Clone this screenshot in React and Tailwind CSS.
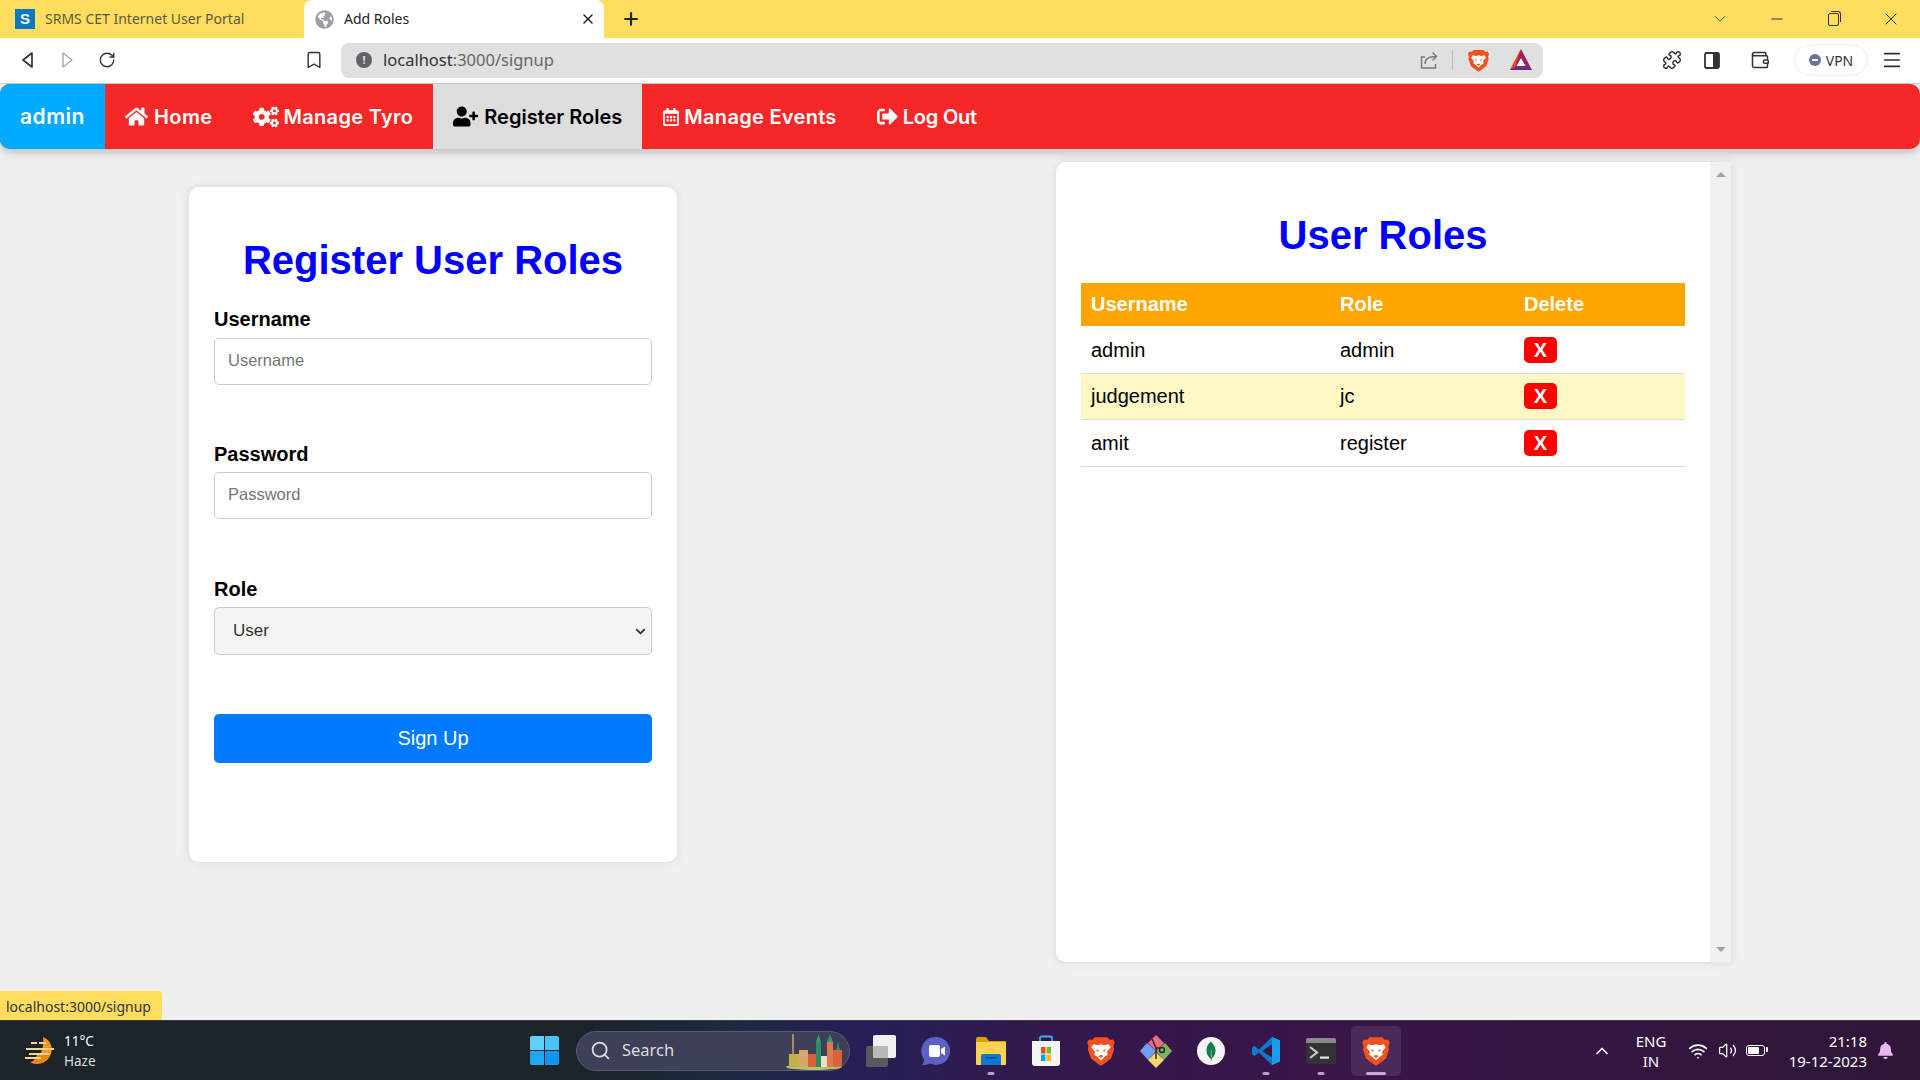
import { ChevronDown, Minus, X, Plus, RotateCw, Bookmark, Puzzle, Wallet, Menu, Search, ChevronUp, Wifi, Volume2 } from "lucide-react";
import { FaHome, FaCogs, FaUserPlus, FaRegCalendarAlt, FaSignOutAlt, FaBell, FaGlobeAmericas } from "react-icons/fa";
import { SiMongodb } from "react-icons/si";

function Brave({ size = 24 }) {
  return (
    <svg width={size} height={size} viewBox="0 0 24 24">
      <path d="M7 1h10l2 2 2.500-.3L23 5l-1 3.500.5 2L20 18l-6 4.500-2 1.300-2-1.300L4 18 1.500 10.500 2 8.500 1 5l1.500-2.300L5 3z" fill="#f4511e" />
      <path d="M6 6.500l3.500.8L12 6.500l2.500.8L18 6.500l1.800 2.500-3 3.500.6 2.500-2.400 1.500-3 3-3-3-2.400-1.500.6-2.500-3-3.500z" fill="#fff" />
      <path d="M8 10.500l2.300.8-.8 1.400zM16 10.500l-2.300.8.8 1.400zM10 16l2-1 2 1-2 1.500z" fill="#f4511e" />
    </svg>
  );
}

function BatIcon() {
  return (
    <svg width="24" height="24" viewBox="0 0 24 24">
      <path d="M12 1l11 21H1z" fill="#9e1f63" />
      <path d="M12 1L1 22l5-3z" fill="#ff5000" />
      <path d="M1 22h22l-5-3H6z" fill="#662d91" />
      <path d="M12 10l4.500 8h-9z" fill="#fff" />
    </svg>
  );
}

function Sidebar() {
  return (
    <svg width="20" height="20" viewBox="0 0 20 20">
      <rect x="3" y="3" width="14" height="15" rx="1.500" fill="none" stroke="#333" strokeWidth="1.800" />
      <rect x="11" y="3" width="6" height="15" fill="#333" />
    </svg>
  );
}

function Share() {
  return (
    <svg width="20" height="20" viewBox="0 0 20 20" fill="none" stroke="#777" strokeWidth="1.400">
      <path d="M6 7H2.500v11h14v-4" />
      <path d="M6 14c0-5 3-7.500 11-7.500M13.500 2.500l4 4-4 4" />
    </svg>
  );
}

function TaskView() {
  return (
    <svg width="32" height="34" viewBox="0 0 32 34">
      <rect x="1" y="12" width="22" height="21" rx="2" fill="#5a5a5a" />
      <rect x="8" y="1" width="23" height="23" rx="2" fill="#f1f1f1" />
      <rect x="8" y="12" width="15" height="12" rx="1" fill="#b9b9b9" />
    </svg>
  );
}

function Meet() {
  return (
    <svg width="30" height="30" viewBox="0 0 30 30">
      <path d="M15 1a14 14 0 1 1-6 26.600C6 29 2.500 29.500 1 29c1.300-1.500 1.800-3.500 1.800-6A14 14 0 0 1 15 1z" fill="#5c5fc4" />
      <rect x="8" y="9" width="11" height="12" rx="2" fill="#fff" />
      <path d="M20 13l4-2.500v9L20 17z" fill="#fff" />
    </svg>
  );
}

function Folder() {
  return (
    <svg width="32" height="30" viewBox="0 0 32 30">
      <path d="M1 3a2 2 0 0 1 2-2h8l3 4h16a1 1 0 0 1 1 1v4H1z" fill="#d9a008" />
      <path d="M1 6h30v22a1 1 0 0 1-1 1H2a1 1 0 0 1-1-1z" fill="#fdd24e" />
      <path d="M6 20a2 2 0 0 1 2-2h16a2 2 0 0 1 2 2v9H6z" fill="#0f78d4" />
      <rect x="10" y="21" width="12" height="1.500" fill="#0b4f92" />
    </svg>
  );
}

function Store() {
  return (
    <svg width="30" height="32" viewBox="0 0 30 32">
      <path d="M9 7V3a1.500 1.500 0 0 1 1.500-1.500h9A1.500 1.500 0 0 1 21 3v4" fill="none" stroke="#29b6e8" strokeWidth="1.800" />
      <path d="M1 6h28v22a3 3 0 0 1-3 3H4a3 3 0 0 1-3-3z" fill="#f5f5f5" />
      <rect x="10" y="12" width="4.500" height="6.500" fill="#e8501f" />
      <rect x="15.500" y="12" width="4.500" height="6.500" fill="#7cb82f" />
      <rect x="10" y="19.500" width="4.500" height="6.500" fill="#00a4ef" />
      <rect x="15.500" y="19.500" width="4.500" height="6.500" fill="#ffb900" />
    </svg>
  );
}

function Kraken() {
  return (
    <svg width="32" height="34" viewBox="0 0 32 34">
      <path d="M16 1l8 8-8 8-8-8z" fill="#e8707c" />
      <path d="M7 9l9 8-8 9-8-9z" fill="#6fa0f0" />
      <path d="M25 9l7 8-8 9-8-9z" fill="#79b85a" />
      <path d="M16 18l8 8-8 8-8-8z" fill="#f1d86d" />
      <path d="M12 5l4 9 4 0M16 14v11" stroke="#3a2030" strokeWidth="1.500" fill="none" />
      <circle cx="22" cy="16" r="2.500" fill="none" stroke="#3a2030" strokeWidth="1.500" />
    </svg>
  );
}

function Mongo() {
  return (
    <div className="flex h-[28px] w-[28px] items-center justify-center rounded-full bg-[#f3f3f3]">
      <SiMongodb className="text-[20px] text-[#0f7d4e]" />
    </div>
  );
}

function VsCode() {
  return (
    <svg width="30" height="30" viewBox="0 0 30 30">
      <path d="M21 1l8 3.500v21L21 29 8 16.500l-4.500 3.500L1 18.500v-7L3.500 10 8 13.500z" fill="#0a7cc9" />
      <path d="M21 1l8 3.500v21L21 29z" fill="#1e9be8" />
      <path d="M21 8.500L11 15l10 6.500z" fill="#3b1548" />
    </svg>
  );
}

function TerminalIcon() {
  return (
    <svg width="30" height="26" viewBox="0 0 30 26">
      <rect x="0" y="0" width="30" height="26" rx="2" fill="#333" />
      <path d="M0 2a2 2 0 0 1 2-2h26a2 2 0 0 1 2 2v3H0z" fill="#8a8a8a" />
      <path d="M4 9l7 5.500L4 20" fill="none" stroke="#c8c8c8" strokeWidth="2.200" />
      <rect x="14" y="18.500" width="9" height="2.200" fill="#e5e5e5" />
    </svg>
  );
}

function Weather() {
  return (
    <svg width="30" height="30" viewBox="0 0 30 30">
      <path d="M18 1c8 3 11 12 7 19-4 8-14 10-20 6C13 25 20 14 18 1z" fill="#ef9a1f" />
      <path d="M8 26c8 3 15-1 17-7H12z" fill="#e98517" />
      <path d="M6 7h6M14 7h7M1 13h28M4 18h20M0 22h16" stroke="#f4d48a" strokeWidth="2.200" />
    </svg>
  );
}

function Skyline() {
  return (
    <svg width="62" height="38" viewBox="0 0 62 38">
      <ellipse cx="30" cy="35" rx="28" ry="3" fill="#b8c06a" />
      <rect x="8" y="2" width="2" height="26" fill="#a88f55" />
      <rect x="5" y="22" width="10" height="13" fill="#c2b04a" />
      <rect x="15" y="18" width="9" height="17" fill="#d6a66b" />
      <rect x="24" y="22" width="8" height="13" fill="#d9623c" />
      <rect x="32" y="10" width="5" height="25" fill="#2e8b64" />
      <path d="M32 10l2.500-8 2.500 8z" fill="#2e9b6c" />
      <rect x="37" y="24" width="6" height="11" fill="#e8e0c8" />
      <rect x="43" y="10" width="6" height="25" fill="#e07a4c" />
      <path d="M43 10l3-8 3 8z" fill="#2e9b6c" />
      <rect x="49" y="18" width="9" height="17" fill="#d9623c" />
      <path d="M52 18l2-8 2 8z" fill="#2e8b64" />
    </svg>
  );
}

function WinLogo() {
  return (
    <div className="grid h-[29px] w-[29px] grid-cols-2 gap-[1px]">
      <div className="rounded-tl-[2px] bg-[#5fd0fa]" />
      <div className="rounded-tr-[2px] bg-[#4cc2fa]" />
      <div className="rounded-bl-[2px] bg-[#22a7f5]" />
      <div className="rounded-br-[2px] bg-[#0f95f2]" />
    </div>
  );
}

function BrowserChrome() {
  return (
    <div className="font-['Noto_Sans',sans-serif]">
      <div className="flex h-[38px] items-stretch bg-[#ffdd5e]">
        <div className="flex w-[304px] items-center pl-[15px] text-[14px] text-[#5e5a3e]">
          <div className="flex h-[20px] w-[20px] items-center justify-center bg-[#0a78c2] font-['Liberation_Sans',sans-serif] text-[15px] font-bold text-white">S</div>
          <span className="mb-[2px] ml-[10px]">SRMS CET Internet User Portal</span>
        </div>
        <div className="flex w-[300px] items-center rounded-t-[8px] bg-white pl-[11px] pr-[8px] text-[14px] text-[#222]">
          <FaGlobeAmericas className="text-[19px] text-[#9aa0a6]" />
          <span className="mb-[2px] ml-[10px]">Add Roles</span>
          <X size={16} strokeWidth={2.200} className="ml-auto text-[#222]" />
        </div>
        <div className="flex w-[54px] items-center justify-center">
          <Plus size={20} strokeWidth={2.600} className="text-[#222]" />
        </div>
        <div className="ml-auto flex items-center text-[#333]">
          <div className="flex w-[57px] justify-center"><ChevronDown size={18} strokeWidth={1.200} /></div>
          <div className="flex w-[57px] justify-center"><Minus size={18} strokeWidth={1.400} /></div>
          <div className="flex w-[57px] justify-center">
            <div className="relative -ml-[1px] h-[13px] w-[11px] rounded-[2px] border border-[#333]">
              <div className="absolute -right-[3px] -top-[3px] h-[11px] w-[10px] rounded-tr-[3px] border-r border-t border-[#333]" />
            </div>
          </div>
          <div className="flex w-[58px] justify-center"><X size={20} strokeWidth={1.200} /></div>
        </div>
      </div>
      <div className="flex h-[46px] items-center border-b border-[#cfcfcf] bg-white pb-[1px]">
        <svg className="ml-[18px]" width="20" height="20" viewBox="0 0 20 20"><path d="M14 3L5 10l9 7z" fill="none" stroke="#333" strokeWidth="1.700" strokeLinejoin="round" /></svg>
        <svg className="ml-[19px]" width="20" height="20" viewBox="0 0 20 20"><path d="M6 3l9 7-9 7z" fill="none" stroke="#aaa" strokeWidth="1.500" strokeLinejoin="round" /></svg>
        <RotateCw size={18} strokeWidth={1.800} className="ml-[21px] text-[#333]" />
        <Bookmark size={20} strokeWidth={1.700} className="ml-[188px] text-[#333]" />
        <div className="ml-[17px] flex h-[35px] w-[1202px] items-center rounded-[8px] bg-[#e0e0e0] pl-[15px] pr-[10px]">
          <div className="flex h-[16px] w-[16px] items-center justify-center rounded-full bg-[#5f6368] text-[11px] font-bold text-[#e0e0e0]">!</div>
          <span className="ml-[11px] text-[16.500px] text-[#333]">localhost<span className="text-[#666]">:3000/signup</span></span>
          <div className="ml-auto flex items-center">
            <Share />
            <div className="ml-[13px] mr-[14px] h-[20px] w-[1px] bg-[#bbb]" />
            <Brave size={23} />
            <div className="ml-[19px]"><BatIcon /></div>
          </div>
        </div>
        <Puzzle size={20} strokeWidth={1.800} className="ml-[119px] text-[#333]" />
        <div className="ml-[20px]"><Sidebar /></div>
        <Wallet size={20} strokeWidth={1.800} className="ml-[28px] text-[#333]" />
        <div className="ml-[24px] flex h-[32px] w-[74px] items-center justify-center gap-[5px] rounded-full border border-[#eee] text-[14px] text-[#333]">
          <div className="flex h-[12px] w-[12px] items-center justify-center rounded-full bg-[#6b7299]">
            <div className="h-[2px] w-[6px] bg-white" />
          </div>
          VPN
        </div>
        <Menu size={22} strokeWidth={1.800} className="ml-[13px] text-[#333]" />
      </div>
    </div>
  );
}

function NavItem({ icon, label, active, labelCls }) {
  return (
    <a className={active ? "flex h-full items-center bg-[#dddddd] px-[20px] text-black" : "flex h-full items-center px-[20px] text-white"}>
      {icon}
      <span className={labelCls}>{label}</span>
    </a>
  );
}

function Navbar() {
  return (
    <nav className="relative z-10 flex h-[65px] items-center rounded-[10px] bg-[#f52727] font-['Inter',sans-serif] text-[20px] font-semibold shadow-[0_4px_8px_rgba(0,0,0,0.2)]">
      <a className="flex h-full w-[105px] items-center justify-center rounded-l-[10px] bg-[#00aaff] text-[21px] tracking-[0.5px] text-white">admin</a>
      <NavItem icon={<FaHome className="text-[23px]" />} label="Home" labelCls="ml-[6px] tracking-[0.4px]" />
      <NavItem icon={<FaCogs className="text-[26px]" />} label="Manage Tyro" labelCls="ml-[5px] tracking-[0.3px]" />
      <NavItem icon={<FaUserPlus className="text-[25px]" />} label="Register Roles" labelCls="ml-[6px]" active />
      <NavItem icon={<FaRegCalendarAlt className="text-[18px]" />} label="Manage Events" labelCls="ml-[4px] tracking-[0.3px]" />
      <NavItem icon={<FaSignOutAlt className="text-[21px]" />} label="Log Out" labelCls="ml-[5px] tracking-[-0.2px]" />
    </nav>
  );
}

const labelCls = "block text-[20px] font-bold leading-[24px] text-black";
const inputCls = "block h-[47px] w-full rounded-[5px] border border-[#ccc] bg-white px-[13px] pb-[2px] text-[16.500px] placeholder:text-[#757575]";

function SignupForm() {
  return (
    <div className="mt-[38px] h-[675px] w-[488px] rounded-[10px] bg-white px-[25px] pt-[50px] shadow-[0_0_10px_rgba(0,0,0,0.1)]">
      <h2 className="text-center text-[40px] font-bold leading-[46px] text-[#0000ff]">Register User Roles</h2>
      <label className={`mt-[24px] ${labelCls}`}>Username</label>
      <input className={`mt-[7px] ${inputCls}`} placeholder="Username" />
      <label className={`mt-[57px] ${labelCls}`}>Password</label>
      <input className={`mt-[6px] ${inputCls}`} placeholder="Password" type="password" />
      <label className={`mt-[58px] ${labelCls}`}>Role</label>
      <div className="relative mt-[6px]">
        <select className="block h-[48px] w-full appearance-none rounded-[5px] border border-[#ccc] bg-[#f4f4f4] pl-[18px] pr-[30px] text-[17px] text-[#333]">
          <option>User</option>
        </select>
        <ChevronDown size={15} strokeWidth={3} className="pointer-events-none absolute right-[4px] top-[17px] text-[#333]" />
      </div>
      <button className="mt-[59px] block h-[49px] w-full rounded-[5px] bg-[#007bff] pb-[2px] text-[20px] text-white">Sign Up</button>
    </div>
  );
}

const roles = [
  { name: "admin", role: "admin", row: "h-[47px]", cell: "px-[10px] pt-[2px]" },
  { name: "judgement", role: "jc", row: "h-[46px] bg-[#fff8c4]", cell: "px-[10px]" },
  { name: "amit", role: "register", row: "h-[47px]", cell: "px-[10px]" },
];

function RolesTable() {
  return (
    <div className="mt-[13px] flex h-[800px] w-[675px] overflow-hidden rounded-l-[10px] bg-white shadow-[0_0_10px_rgba(0,0,0,0.1)]">
      <div className="w-[654px] px-[25px] pt-[50px]">
        <h2 className="text-center text-[40px] font-bold leading-[46px] text-[#0000ff]">User Roles</h2>
        <table className="mt-[25px] w-[604px] table-fixed border-collapse text-[20px]">
          <thead>
            <tr className="h-[43px] bg-[#ffa500] text-left text-white">
              <th className="w-[249px] px-[10px] pb-[2px] font-bold">Username</th>
              <th className="w-[184px] px-[10px] pb-[2px] font-bold">Role</th>
              <th className="px-[10px] pb-[2px] font-bold">Delete</th>
            </tr>
          </thead>
          <tbody>
            {roles.map((r) => (
              <tr key={r.name} className={`border-b border-[#ddd] ${r.row}`}>
                <td className={r.cell}>{r.name}</td>
                <td className={r.cell}>{r.role}</td>
                <td className={r.cell}>
                  <button className="flex h-[26px] w-[33px] items-center justify-center rounded-[5px] bg-[#ff0000] font-bold text-white">X</button>
                </td>
              </tr>
            ))}
          </tbody>
        </table>
      </div>
      <div className="flex w-[21px] flex-col items-center justify-between bg-[#f1f1f1] py-[10px]">
        <div className="h-0 w-0 border-x-[5px] border-b-[5px] border-x-transparent border-b-[#a3a3a3]" />
        <div className="h-0 w-0 border-x-[5px] border-t-[5px] border-x-transparent border-t-[#a3a3a3]" />
      </div>
    </div>
  );
}

function TaskSlot({ children, dot, active }) {
  return (
    <div className={active ? "relative mx-[2.500px] flex h-[50px] w-[50px] items-center justify-center rounded-[5px] bg-[#4a2a5a]" : "relative flex h-[50px] w-[55px] items-center justify-center"}>
      {children}
      {dot && <div className="absolute bottom-[1px] left-1/2 h-[3px] w-[7px] -translate-x-1/2 rounded-full bg-[#b5a4bd]" />}
      {active && <div className="absolute bottom-[1px] left-1/2 h-[3px] w-[20px] -translate-x-1/2 rounded-full bg-[#d9a0e0]" />}
    </div>
  );
}

function Taskbar() {
  return (
    <div className="flex h-[60px] items-center border-t border-[#3a3a44] bg-[linear-gradient(90deg,#1c2329_0%,#1c2329_30%,#1c2a3e_37%,#252056_44%,#34184d_55%,#3a1548_70%,#2e1638_100%)] font-['Noto_Sans',sans-serif] text-white">
      <div className="flex w-[530px] items-center pl-[25px]">
        <Weather />
        <div className="ml-[9px] text-[13.500px] leading-[20px]">
          <div>11°C</div>
          <div className="text-[#ddd]">Haze</div>
        </div>
      </div>
      <WinLogo />
      <div className="ml-[17px] flex h-[40px] w-[274px] items-center rounded-full border border-[#555a70] bg-[#3d4058] pl-[13px] text-[16.500px] text-[#ddd]">
        <Search size={21} strokeWidth={2} />
        <span className="ml-[11px]">Search</span>
        <div className="ml-auto mr-[3px]"><Skyline /></div>
      </div>
      <div className="ml-[3px] flex items-center">
        <TaskSlot><TaskView /></TaskSlot>
        <TaskSlot><Meet /></TaskSlot>
        <TaskSlot dot><Folder /></TaskSlot>
        <TaskSlot><Store /></TaskSlot>
        <TaskSlot><Brave size={30} /></TaskSlot>
        <TaskSlot><Kraken /></TaskSlot>
        <TaskSlot><Mongo /></TaskSlot>
        <TaskSlot dot><VsCode /></TaskSlot>
        <TaskSlot dot><TerminalIcon /></TaskSlot>
        <TaskSlot active><Brave size={30} /></TaskSlot>
      </div>
      <ChevronUp size={20} strokeWidth={2} className="ml-[189px]" />
      <div className="ml-[16px] w-[46px] text-center text-[15px] leading-[20px]">
        <div>ENG</div>
        <div>IN</div>
      </div>
      <Wifi size={20} strokeWidth={2} className="ml-[14px]" />
      <Volume2 size={19} strokeWidth={1.600} className="ml-[10px]" />
      <div className="relative ml-[9px] flex h-[11px] w-[19px] items-center rounded-[3px] border-[1.500px] border-white p-[1px]">
        <div className="h-full w-[11px] rounded-[1px] bg-white" />
        <div className="absolute -right-[3.500px] top-[1px] h-[5px] w-[2px] rounded-r-[1px] bg-white" />
      </div>
      <div className="ml-[4px] w-[98px] text-right text-[15px] leading-[20px]">
        <div>21:18</div>
        <div>19-12-2023</div>
      </div>
      <FaBell className="ml-[10px] text-[17px] text-[#eab8f0]" />
    </div>
  );
}

export default function App() {
  return (
    <div className="flex h-screen w-full flex-col overflow-hidden bg-[#f0f0f0] font-['Liberation_Sans',sans-serif]">
      <BrowserChrome />
      <Navbar />
      <main className="relative flex flex-1 items-start pl-[189px]">
        <SignupForm />
        <div className="ml-[379px]">
          <RolesTable />
        </div>
        <div className="absolute bottom-0 left-0 flex h-[29px] w-[162px] items-center rounded-tr-[4px] bg-[#ffdd5e] pl-[6px] pt-[1px] font-['Noto_Sans',sans-serif] text-[14px] text-[#333]">
          localhost:3000/signup
        </div>
      </main>
      <Taskbar />
    </div>
  );
}
